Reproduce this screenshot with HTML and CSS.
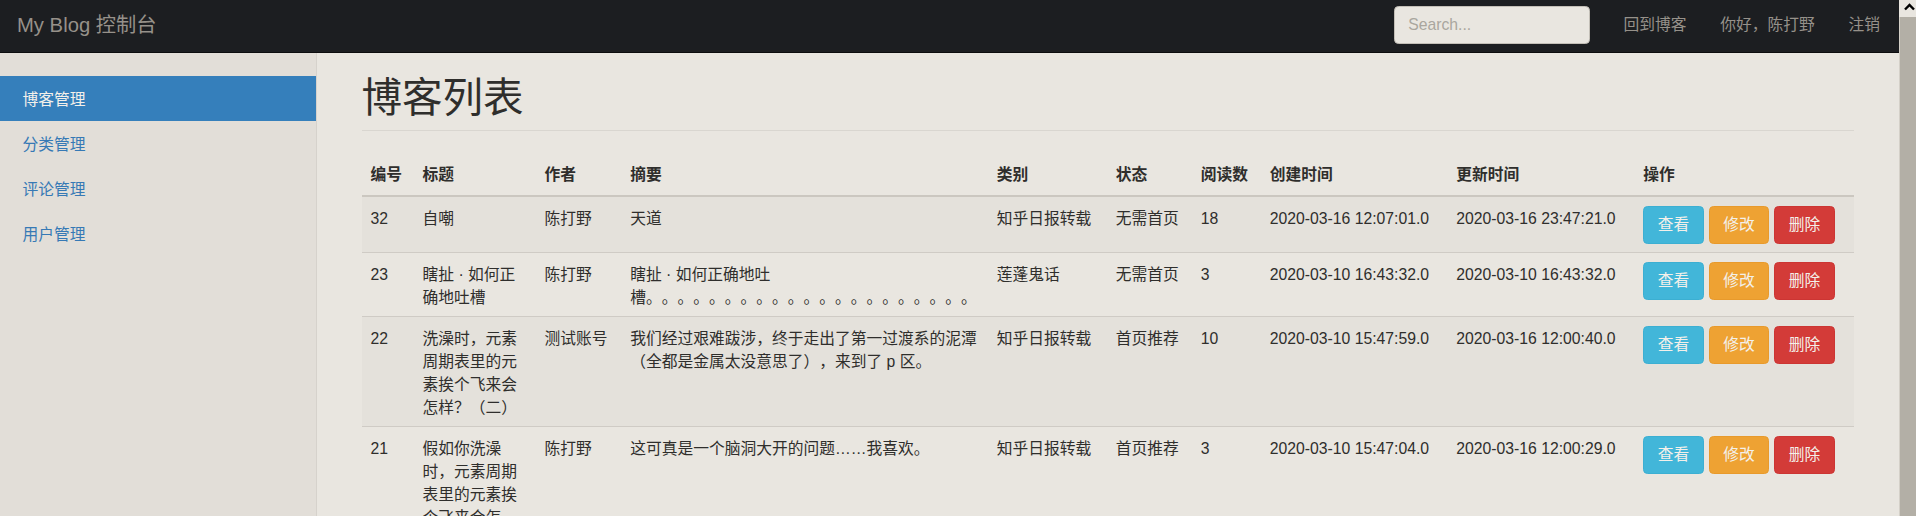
FILE: index.html
```html
<!DOCTYPE html>
<html lang="zh-CN">
<head>
<meta charset="utf-8">
<title>My Blog 控制台</title>
<link rel="stylesheet" href="styles.css">
</head>
<body>
<div class="viewport">
  <div class="page">
    <nav class="navbar">
      <a class="brand" href="#">My Blog 控制台</a>
      <div class="navbar-right">
        <form class="search-form"><input class="search" type="text" placeholder="Search..."></form>
        <ul class="nav-links">
          <li><a href="#">回到博客</a></li>
          <li><a href="#">你好，陈打野</a></li>
          <li><a href="#">注销</a></li>
        </ul>
      </div>
    </nav>
    <div class="layout">
      <aside class="sidebar">
        <ul class="side-nav">
          <li class="active"><a href="#">博客管理</a></li>
          <li><a href="#">分类管理</a></li>
          <li><a href="#">评论管理</a></li>
          <li><a href="#">用户管理</a></li>
        </ul>
      </aside>
      <main class="main">
        <h1 class="page-header">博客列表</h1>
        <table class="table">
          <colgroup>
            <col class="c-id"><col class="c-title"><col class="c-author"><col class="c-summary"><col class="c-cat">
            <col class="c-state"><col class="c-views"><col class="c-created"><col class="c-updated"><col class="c-ops">
          </colgroup>
          <thead>
            <tr>
              <th>编号</th><th>标题</th><th>作者</th><th>摘要</th><th>类别</th>
              <th>状态</th><th>阅读数</th><th>创建时间</th><th>更新时间</th><th>操作</th>
            </tr>
          </thead>
          <tbody>
            <tr>
              <td>32</td><td>自嘲</td><td>陈打野</td><td>天道</td><td>知乎日报转载</td>
              <td>无需首页</td><td>18</td><td>2020-03-16 12:07:01.0</td><td>2020-03-16 23:47:21.0</td>
              <td class="ops"><div class="btns"><a class="btn btn-info" href="#">查看</a><a class="btn btn-warning" href="#">修改</a><a class="btn btn-danger" href="#">删除</a></div></td>
            </tr>
            <tr>
              <td>23</td><td>瞎扯 · 如何正确地吐槽</td><td>陈打野</td><td>瞎扯 · 如何正确地吐槽。。。。。。。。。。。。。。。。。。。。。</td><td>莲蓬鬼话</td>
              <td>无需首页</td><td>3</td><td>2020-03-10 16:43:32.0</td><td>2020-03-10 16:43:32.0</td>
              <td class="ops"><div class="btns"><a class="btn btn-info" href="#">查看</a><a class="btn btn-warning" href="#">修改</a><a class="btn btn-danger" href="#">删除</a></div></td>
            </tr>
            <tr>
              <td>22</td><td>洗澡时，元素周期表里的元素挨个飞来会怎样？（二）</td><td>测试账号</td><td>我们经过艰难跋涉，终于走出了第一过渡系的泥潭（全都是金属太没意思了），来到了 p 区。</td><td>知乎日报转载</td>
              <td>首页推荐</td><td>10</td><td>2020-03-10 15:47:59.0</td><td>2020-03-16 12:00:40.0</td>
              <td class="ops"><div class="btns"><a class="btn btn-info" href="#">查看</a><a class="btn btn-warning" href="#">修改</a><a class="btn btn-danger" href="#">删除</a></div></td>
            </tr>
            <tr>
              <td>21</td><td>假如你洗澡时，元素周期表里的元素挨个飞来会怎样？</td><td>陈打野</td><td>这可真是一个脑洞大开的问题……我喜欢。</td><td>知乎日报转载</td>
              <td>首页推荐</td><td>3</td><td>2020-03-10 15:47:04.0</td><td>2020-03-16 12:00:29.0</td>
              <td class="ops"><div class="btns"><a class="btn btn-info" href="#">查看</a><a class="btn btn-warning" href="#">修改</a><a class="btn btn-danger" href="#">删除</a></div></td>
            </tr>
          </tbody>
        </table>
      </main>
    </div>
  </div>
  <div class="scrollbar">
    <div class="scroll-arrow">
      <svg width="17" height="17" viewBox="0 0 17 17"><path d="M6 9.5 L10.5 5 L15 9.5" fill="none" stroke="#000" stroke-width="2.4"/></svg>
    </div>
    <div class="scroll-thumb"></div>
  </div>
</div>
</body>
</html>
```

FILE: styles.css
```css
* { box-sizing: border-box; }

html, body {
  margin: 0;
  padding: 0;
  height: 516px;
  overflow: hidden;
}

body {
  font-family: "Liberation Sans", "Noto Sans CJK SC", sans-serif;
  font-size: 15.75px;
  line-height: 22.5px;
  color: #2f2e2c;
  background: #e9e6e0;
  text-spacing-trim: space-all;
  font-kerning: none;
}

.viewport {
  display: flex;
  height: 516px;
}

.page {
  flex: 1;
  min-width: 0;
  display: flex;
  flex-direction: column;
  overflow: hidden;
}

/* scrollbar */
.scrollbar {
  width: 17px;
  flex: none;
  display: flex;
  flex-direction: column;
  background: #e9e6e0;
}
.scroll-arrow {
  height: 17px;
  flex: none;
}
.scroll-arrow svg { display: block; }
.scroll-thumb {
  flex: 1;
  background: #b3afa6;
  border-left: 1px solid #d4d0c8;
}

/* navbar */
.navbar {
  height: 53px;
  flex: none;
  background: #1c1e21;
  border-bottom: 1px solid #0c0d0e;
  display: flex;
  align-items: center;
  justify-content: space-between;
  padding-bottom: 2px;
}
.brand {
  padding: 0 17px;
  font-size: 20.25px;
  color: #96918a;
  text-decoration: none;
}
.navbar-right {
  display: flex;
  align-items: center;
  margin-right: 2px;
}
.search-form {
  margin: 0;
  padding: 0 17px 0 11px;
}
.search {
  display: block;
  width: 196px;
  height: 38px;
  padding: 0 13.5px;
  font-family: inherit;
  font-size: 15.75px;
  color: #2f2e2c;
  background: #e9e6e0;
  border: 1px solid #c3bfb7;
  border-radius: 4.5px;
  outline: none;
}
.search::placeholder { color: #aaa69e; }
.nav-links {
  display: flex;
  list-style: none;
  margin: 0;
  padding: 0;
}
.nav-links a {
  display: block;
  padding: 1px 16.9px 0;
  color: #96918a;
  text-decoration: none;
}

/* layout */
.layout {
  flex: 1;
  display: flex;
  min-height: 0;
}

.sidebar {
  width: 316.5px;
  flex: none;
  background: #e2ded8;
  border-right: 1px solid #d6d2cc;
  padding: 22.5px 0;
}
.side-nav {
  list-style: none;
  margin: 0;
  padding: 0;
}
.side-nav a {
  display: block;
  padding: 13.5px 22.5px 9px;
  color: #3679b5;
  text-decoration: none;
}
.side-nav .active a {
  background: #357fbb;
  color: #f3f0ea;
}

.main {
  flex: 1;
  min-width: 0;
  padding: 22.5px 45px 0 45px;
}

.page-header {
  margin: 0 0 22.5px;
  padding-bottom: 10px;
  border-bottom: 1px solid #d9d6d0;
  font-size: 40.5px;
  font-weight: 400;
  line-height: 1.1;
  color: #2f2e2c;
}

/* table */
.table {
  width: 100%;
  border-collapse: collapse;
  table-layout: fixed;
}
.c-id { width: 52px; }
.c-title { width: 122px; }
.c-author { width: 85.6px; }
.c-summary { width: 366.4px; }
.c-cat { width: 119px; }
.c-state { width: 85px; }
.c-views { width: 69px; }
.c-created { width: 186.4px; }
.c-updated { width: 187px; }
.c-ops { width: 219.6px; }

.table th,
.table td {
  padding: 9px 9px 8px;
  text-align: left;
  vertical-align: top;
  line-height: 23px;
  border-top: 1px solid #cfcbc5;
}
.table td {
  padding-top: 10px;
  padding-bottom: 7px;
}
.table td.ops {
  padding-top: 9px;
  padding-bottom: 8px;
}
.table thead th {
  vertical-align: bottom;
  border-top: 0;
  border-bottom: 2px solid #cbc7c0;
  font-weight: 700;
  padding-bottom: 9px;
}
.table tbody tr:nth-child(odd) td {
  background: #e4e1db;
}

.btns {
  display: flex;
  gap: 5px;
}
.btn {
  display: block;
  padding: 7.25px 13.5px 6.25px;
  font-size: 15.75px;
  line-height: 22.5px;
  border: 1px solid transparent;
  border-radius: 4.5px;
  color: #f3f0ea;
  text-decoration: none;
  white-space: nowrap;
}
.btn-info { background: #42b6d9; border-color: #3cafd2; }
.btn-warning { background: #eea233; border-color: #e89a2c; }
.btn-danger { background: #d33b38; border-color: #cc3533; }
```
